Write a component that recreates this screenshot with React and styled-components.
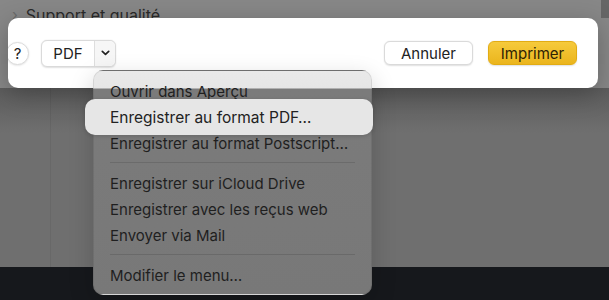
import React from "react";
import styled, { createGlobalStyle } from "styled-components";

const Global = createGlobalStyle`
  html, body { margin: 0; padding: 0; background: #6f6f6f; }
  body { font-family: Inter, "Noto Sans", "Liberation Sans", sans-serif; -webkit-font-smoothing: antialiased; }
`;

const Screen = styled.div`
  position: relative;
  width: 609px;
  height: 300px;
  overflow: hidden;
  display: flex;
  flex-direction: column;
  background: #6f6f6f;
`;

const SheetArea = styled.div`
  background: #878787;
  display: flex;
  flex-direction: column;
`;

const TopStrip = styled.div`
  height: 18px;
  display: flex;
  align-items: flex-end;
  gap: 8px;
  padding-left: 12px;
  box-shadow: inset -8px 0 0 #666;
`;

const TopChevron = styled.span`
  color: #6a6a6a;
  font-size: 15px;
  line-height: 22px;
  margin-bottom: -8px;
`;

const TopLabel = styled.span`
  color: #2a2a2a;
  font-size: 16px;
  line-height: 22px;
  margin-bottom: -8px;
`;

const Panel = styled.div`
  position: relative;
  z-index: 1;
  height: 70px;
  margin: 0 11px 0 8px;
  background: #ffffff;
  border-radius: 10px;
  overflow: hidden;
  display: flex;
  align-items: center;
  padding-right: 21px;
  box-shadow: 0 6px 24px rgba(0, 0, 0, 0.25);
`;

const HelpButton = styled.div`
  width: 21px;
  height: 21px;
  margin-left: -2px;
  border-radius: 50%;
  background: #fff;
  border: 1px solid #dcdcdc;
  box-shadow: 0 0.5px 2px rgba(0, 0, 0, 0.12);
  display: flex;
  align-items: center;
  justify-content: center;
  font-size: 15px;
  color: #222;
  flex-shrink: 0;
`;

const Split = styled.div`
  margin-left: 12px;
  height: 25px;
  display: flex;
  border: 1px solid #dadada;
  border-radius: 6px;
  box-shadow: 0 0.5px 1.5px rgba(0, 0, 0, 0.12);
  background: #fff;
`;

const SplitMain = styled.div`
  width: 52px;
  display: flex;
  align-items: center;
  justify-content: center;
  font-size: 15px;
  color: #222;
  border-right: 1px solid #dedede;
`;

const SplitArrow = styled.div`
  width: 20px;
  display: flex;
  align-items: center;
  justify-content: center;
  background: #f6f6f6;
  border-radius: 0 6px 6px 0;
`;

const Spacer = styled.div`
  flex: 1;
`;

const Button = styled.div`
  width: 89px;
  height: 24px;
  box-sizing: border-box;
  display: flex;
  align-items: center;
  justify-content: center;
  font-size: 15px;
  border-radius: 6px;
  margin-left: ${(p) => (p.$gap ? "15px" : "0")};
  color: ${(p) => (p.$primary ? "#2e2305" : "#222")};
  background: ${(p) =>
    p.$primary ? "linear-gradient(#f6ca3c, #ebb51d)" : "#ffffff"};
  border: 1px solid ${(p) => (p.$primary ? "#e2ac14" : "#dadada")};
  box-shadow: 0 0.5px 1.5px rgba(0, 0, 0, 0.12);
`;

const Backdrop = styled.div`
  flex: 1;
  display: flex;
  background: linear-gradient(#5c5c5c, #6f6f6f 45px);
`;

const SideColumn = styled.div`
  width: 50px;
  border-right: 1px solid rgba(0, 0, 0, 0.06);
`;

const Footer = styled.div`
  height: 33px;
  background: #16181c;
`;

const Menu = styled.div`
  position: absolute;
  z-index: 2;
  left: 93px;
  top: 70px;
  width: 279px;
  box-sizing: border-box;
  padding: 7px 0 6px;
  border-radius: 10px;
  background: linear-gradient(#e9e9e9 0, #e6e6e6 17px, #7b7b7b 18px, #787878 100%);
  border: 1px solid rgba(0, 0, 0, 0.08);
  box-shadow: 0 8px 24px rgba(0, 0, 0, 0.18);
  display: flex;
  flex-direction: column;
`;

const Item = styled.div`
  height: 26px;
  display: flex;
  align-items: center;
  padding-left: 16px;
  font-size: 15px;
  color: #1f1f1f;
  white-space: nowrap;
`;

const ActiveItem = styled(Item)`
  height: 36px;
  margin: -5px -2px -5px -9px;
  padding-left: 25px;
  font-size: 15.5px;
  background: #e6e6e6;
  border-radius: 10px;
  box-shadow: 0 1px 4px rgba(0, 0, 0, 0.15);
  color: #222;
`;

const Separator = styled.div`
  height: 1px;
  margin: 6px 16px 7px 16px;
  background: rgba(0, 0, 0, 0.12);
`;

const Chevron = () => (
  <svg width="9" height="6" viewBox="0 0 9 6">
    <path d="M1.3 1.3 L4.5 4.4 L7.7 1.3" fill="none" stroke="#222" strokeWidth="1.7" strokeLinecap="round" strokeLinejoin="round" />
  </svg>
);

export default function App() {
  return (
    <>
      <Global />
      <Screen>
        <SheetArea>
          <TopStrip>
            <TopChevron>›</TopChevron>
            <TopLabel>Support et qualité</TopLabel>
          </TopStrip>
          <Panel>
            <HelpButton>?</HelpButton>
            <Split>
              <SplitMain>PDF</SplitMain>
              <SplitArrow>
                <Chevron />
              </SplitArrow>
            </Split>
            <Spacer />
            <Button>Annuler</Button>
            <Button $primary $gap>Imprimer</Button>
          </Panel>
        </SheetArea>
        <Backdrop>
          <SideColumn />
        </Backdrop>
        <Footer />
        <Menu>
          <Item>Ouvrir dans Aperçu</Item>
          <ActiveItem>Enregistrer au format PDF…</ActiveItem>
          <Item>Enregistrer au format Postscript…</Item>
          <Separator />
          <Item>Enregistrer sur iCloud Drive</Item>
          <Item>Enregistrer avec les reçus web</Item>
          <Item>Envoyer via Mail</Item>
          <Separator />
          <Item>Modifier le menu…</Item>
        </Menu>
      </Screen>
    </>
  );
}
